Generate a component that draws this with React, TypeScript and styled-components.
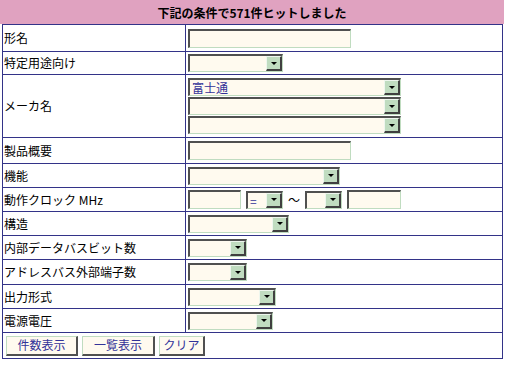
import React from "react";
import styled, { createGlobalStyle } from "styled-components";

const GlobalStyle = createGlobalStyle`
  body {
    margin: 0;
    background: #ffffff;
    font-family: "Noto Sans CJK JP", "DejaVu Sans", sans-serif;
    font-size: 12px;
    color: #000000;
  }
`;

const Page = styled.div`
  width: 504px;
`;

const Title = styled.div`
  height: 24px;
  background: #e0a2c0;
  display: flex;
  align-items: center;
  justify-content: center;
  font-weight: bold;
  font-size: 12px;
`;

const Grid = styled.div`
  margin-left: 2px;
  width: 499px;
  border: 1px solid #333388;
  display: grid;
  grid-template-columns: 183px 1fr;
`;

const Label = styled.div<{ $h: number }>`
  height: ${(p) => p.$h}px;
  border-right: 1px solid #333388;
  border-bottom: 1px solid #333388;
  display: flex;
  align-items: center;
  padding-left: 1px;
  line-height: 1;
`;

const Field = styled.div<{ $h: number }>`
  height: ${(p) => p.$h}px;
  border-bottom: 1px solid #333388;
  display: flex;
  flex-direction: column;
  justify-content: center;
  padding-left: 2px;
  gap: 1px;
`;

const Inline = styled.div`
  display: flex;
  align-items: center;
  gap: 5px;
`;

const ButtonRow = styled.div`
  grid-column: 1 / 3;
  height: 25px;
  display: flex;
  align-items: center;
  padding-left: 3px;
  gap: 4px;
`;

const TextBox = styled.div<{ $w: number }>`
  box-sizing: border-box;
  width: ${(p) => p.$w}px;
  height: 19px;
  background: #fffaef;
  border-top: 2px solid #505050;
  border-left: 2px solid #505050;
  border-right: 1px solid #c0dcc0;
  border-bottom: 1px solid #c0dcc0;
`;

const SelectBox = styled.div<{ $w: number }>`
  box-sizing: border-box;
  width: ${(p) => p.$w}px;
  height: 18px;
  background: #fffaef;
  border-top: 2px solid #505050;
  border-left: 2px solid #505050;
  border-right: 1px solid #c0dcc0;
  border-bottom: 1px solid #c0dcc0;
  display: flex;
  align-items: stretch;
`;

const SelectValue = styled.span`
  flex: 1;
  padding-left: 2px;
  color: #333399;
  font-size: 12px;
  line-height: 15px;
  white-space: nowrap;
  overflow: hidden;
`;

const ArrowButton = styled.span`
  box-sizing: border-box;
  width: 16px;
  background: #c0dcc0;
  border-top: 1px solid #eef6ee;
  border-left: 1px solid #eef6ee;
  border-right: 2px solid #404040;
  border-bottom: 2px solid #404040;
  display: flex;
  align-items: center;
  justify-content: center;

  &::after {
    content: "";
    border-left: 3px solid transparent;
    border-right: 3px solid transparent;
    border-top: 3px solid #000000;
  }
`;

const Tilde = styled.span`
  width: 12px;
  text-align: center;
  font-size: 12px;
`;

const Button = styled.button<{ $w: number }>`
  box-sizing: border-box;
  width: ${(p) => p.$w}px;
  height: 20px;
  padding: 0;
  background: #fffaef;
  color: #333399;
  font-family: "Noto Sans CJK JP", "DejaVu Sans", sans-serif;
  font-size: 12px;
  line-height: 1;
  border-top: 1px solid #c0dcc0;
  border-left: 1px solid #c0dcc0;
  border-right: 2px solid #505050;
  border-bottom: 2px solid #505050;
  cursor: pointer;
`;

const Select = ({ w, value }: { w: number; value?: string }) => (
  <SelectBox $w={w}>
    <SelectValue>{value}</SelectValue>
    <ArrowButton />
  </SelectBox>
);

const App = () => {
  return (
    <Page>
      <GlobalStyle />
      <Title>下記の条件で571件ヒットしました</Title>
      <Grid>
        <Label $h={26}>形名</Label>
        <Field $h={26}>
          <TextBox $w={163} />
        </Field>

        <Label $h={22}>特定用途向け</Label>
        <Field $h={22}>
          <Select w={95} />
        </Field>

        <Label $h={62}>メーカ名</Label>
        <Field $h={62}>
          <Select w={213} value="富士通" />
          <Select w={213} />
          <Select w={213} />
        </Field>

        <Label $h={25}>製品概要</Label>
        <Field $h={25}>
          <TextBox $w={163} />
        </Field>

        <Label $h={23}>機能</Label>
        <Field $h={23}>
          <Select w={152} />
        </Field>

        <Label $h={23}>動作クロック MHz</Label>
        <Field $h={23}>
          <Inline>
            <TextBox $w={53} />
            <Select w={37} value="=" />
            <Tilde>～</Tilde>
            <Select w={37} />
            <TextBox $w={54} />
          </Inline>
        </Field>

        <Label $h={23}>構造</Label>
        <Field $h={23}>
          <Select w={101} />
        </Field>

        <Label $h={23}>内部データバスビット数</Label>
        <Field $h={23}>
          <Select w={59} />
        </Field>

        <Label $h={24}>アドレスバス外部端子数</Label>
        <Field $h={24}>
          <Select w={59} />
        </Field>

        <Label $h={23}>出力形式</Label>
        <Field $h={23}>
          <Select w={88} />
        </Field>

        <Label $h={23}>電源電圧</Label>
        <Field $h={23}>
          <Select w={85} />
        </Field>

        <ButtonRow>
          <Button $w={72}>件数表示</Button>
          <Button $w={73}>一覧表示</Button>
          <Button $w={46}>クリア</Button>
        </ButtonRow>
      </Grid>
    </Page>
  );
};

export default App;
